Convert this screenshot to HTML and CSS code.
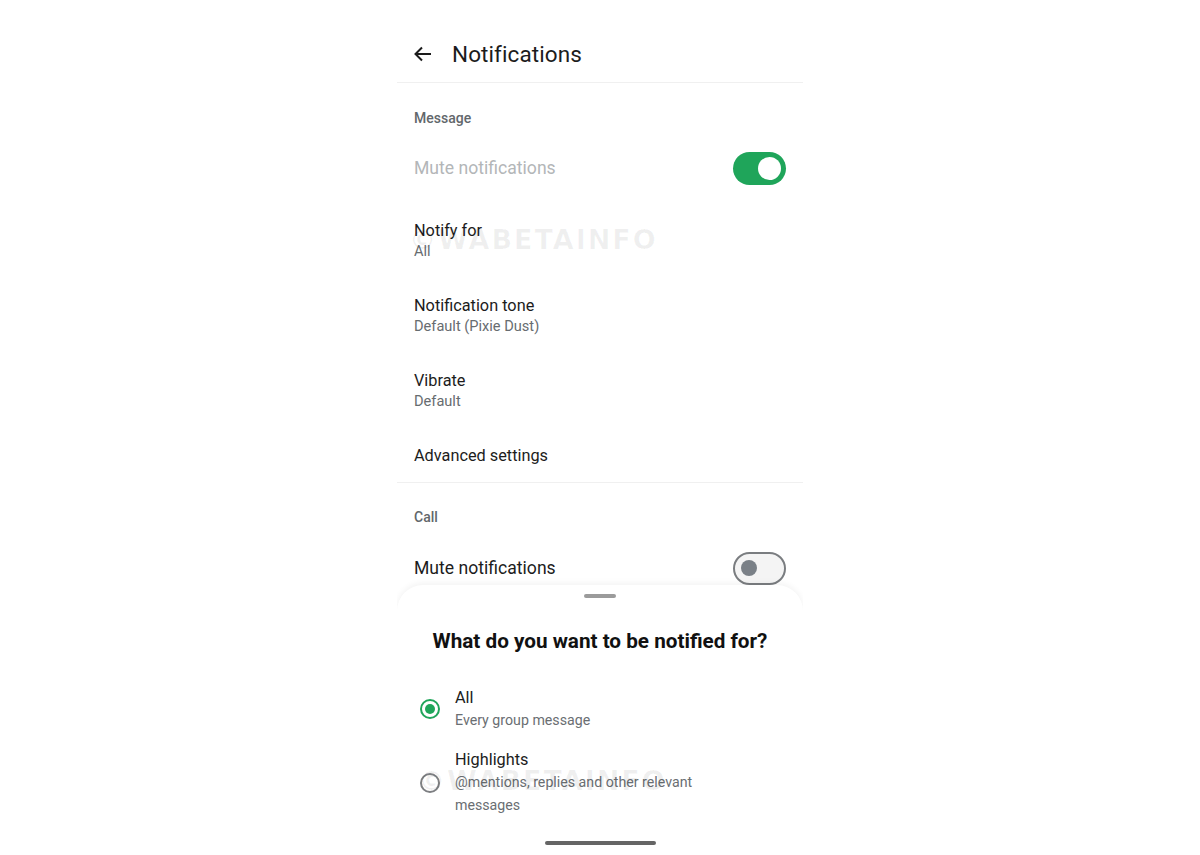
FILE: index.html
```html
<!DOCTYPE html>
<html>

<head>
    <link rel="stylesheet" href="styles.css">
</head>

<body>
    <div class="screen">
        <div class="topbar">
            <svg class="back" width="18" height="16" viewBox="0 0 18 16">
                <path d="M17 8H2M8 1.5L1.5 8L8 14.5" fill="none" stroke="#1c1c1c" stroke-width="2" />
            </svg>
            <h1 class="title">Notifications</h1>
        </div>

        <div class="section-label">Message</div>
        <div class="row switch-row">
            <span class="row-title big disabled">Mute notifications</span>
            <span class="toggle on"><span class="knob"></span></span>
        </div>
        <div class="item">
            <div class="row-title">Notify for</div>
            <div class="row-sub">All</div>
        </div>
        <div class="item">
            <div class="row-title">Notification tone</div>
            <div class="row-sub">Default (Pixie Dust)</div>
        </div>
        <div class="item">
            <div class="row-title">Vibrate</div>
            <div class="row-sub">Default</div>
        </div>
        <div class="row single">
            <span class="row-title">Advanced settings</span>
        </div>

        <div class="section-label call">Call</div>
        <div class="row switch-row">
            <span class="row-title big">Mute notifications</span>
            <span class="toggle off"><span class="knob"></span></span>
        </div>

        <span class="watermark wm-top">©WABETAINFO</span>

        <div class="sheet">
            <div class="handle"></div>
            <h2 class="sheet-title">What do you want to be notified for?</h2>

            <div class="option">
                <span class="radio checked"></span>
                <div class="option-text">
                    <div class="option-title">All</div>
                    <div class="option-sub">Every group message</div>
                </div>
            </div>
            <div class="option">
                <span class="radio"></span>
                <div class="option-text">
                    <div class="option-title">Highlights</div>
                    <div class="option-sub">@mentions, replies and other relevant messages</div>
                </div>
            </div>

            <div class="home-bar"></div>
            <span class="watermark wm-bottom">©WABETAINFO</span>
        </div>
    </div>
</body>

</html>
```

FILE: styles.css
```css
body {
    margin: 0;
    background: #ffffff;
    font-family: Roboto, 'Noto Sans', sans-serif;
    color: #1c1c1c;
}

.screen {
    position: relative;
    width: 406px;
    height: 855px;
    margin: 0 auto;
    overflow: hidden;
}

.topbar {
    display: flex;
    align-items: center;
    height: 56px;
    padding: 26px 0 0 17px;
    border-bottom: 1px solid #f0f0f0;
}

.back {
    margin-right: 20px;
}

.title {
    margin: 0;
    font-size: 22.5px;
    font-weight: 400;
    letter-spacing: 0.1px;
}

.section-label {
    padding: 25px 17px 0;
    line-height: 20px;
    font-size: 14px;
    font-weight: 500;
    color: #62676b;
    margin-bottom: 13px;
}

.section-label.call {
    padding-top: 24px;
    margin-bottom: 14px;
}

.row {
    display: flex;
    align-items: center;
    justify-content: space-between;
    height: 54px;
    padding: 0 17px;
}

.switch-row {
    margin-bottom: 8px;
}

.single {
    border-bottom: 1px solid #f0f0f0;
}

.item {
    display: flex;
    flex-direction: column;
    justify-content: center;
    height: 75px;
    padding: 0 17px;
}

.row-title {
    font-size: 16.3px;
    line-height: 21px;
}

.row-title.big {
    font-size: 17.6px;
}

.row-title.disabled {
    color: #b3b6b8;
}

.row-sub {
    font-size: 14.6px;
    line-height: 21px;
    color: #676c70;
}

.toggle {
    position: relative;
    display: inline-block;
    width: 53px;
    height: 33px;
    border-radius: 17px;
    box-sizing: border-box;
}

.toggle.on {
    background: #1fa55a;
}

.toggle.off {
    background: #f4f4f4;
    border: 2px solid #7a7d80;
}

.toggle .knob {
    position: absolute;
    border-radius: 50%;
}

.toggle.on .knob {
    width: 23px;
    height: 23px;
    right: 5px;
    top: 5px;
    background: #ffffff;
}

.toggle.off .knob {
    width: 16px;
    height: 16px;
    left: 6px;
    top: 6.5px;
    background: #7a8087;
}

.sheet {
    position: absolute;
    left: 0;
    right: 0;
    top: 585px;
    bottom: 0;
    background: #ffffff;
    border-radius: 26px 26px 0 0;
    box-shadow: 0 -2px 6px rgba(0, 0, 0, 0.05);
    display: flex;
    flex-direction: column;
}

.handle {
    width: 32px;
    height: 4px;
    border-radius: 2px;
    background: #9b9b9b;
    margin: 9px auto 0;
}

.sheet-title {
    margin: 29px 0 31px;
    text-align: center;
    font-size: 20.7px;
    line-height: 28px;
    font-weight: 700;
    color: #111111;
}

.option {
    display: flex;
    align-items: center;
    padding-left: 23px;
    margin-bottom: 16px;
}

.radio {
    width: 20px;
    height: 20px;
    border: 2px solid #7d7f82;
    border-radius: 50%;
    box-sizing: border-box;
    margin-right: 15px;
    flex-shrink: 0;
    position: relative;
}

.radio.checked {
    border-color: #1fa55a;
}

.radio.checked::after {
    content: "";
    position: absolute;
    left: 3px;
    top: 3px;
    width: 10px;
    height: 10px;
    border-radius: 50%;
    background: #1fa55a;
}

.option-text {
    width: 245px;
}

.option-title {
    font-size: 16.3px;
    line-height: 23px;
}

.option-sub {
    font-size: 14.2px;
    line-height: 23px;
    color: #6a6e72;
}

.home-bar {
    width: 111px;
    height: 4px;
    border-radius: 2px;
    background: #656565;
    margin: 8px auto 0;
}

.watermark {
    position: absolute;
    font-family: 'DejaVu Sans', sans-serif;
    font-weight: 700;
    font-size: 27px;
    letter-spacing: 2px;
    color: rgba(0, 0, 0, 0.06);
    pointer-events: none;
}

.wm-top {
    left: 12px;
    top: 224px;
}

.wm-bottom {
    left: 21px;
    top: 180px;
}
```
